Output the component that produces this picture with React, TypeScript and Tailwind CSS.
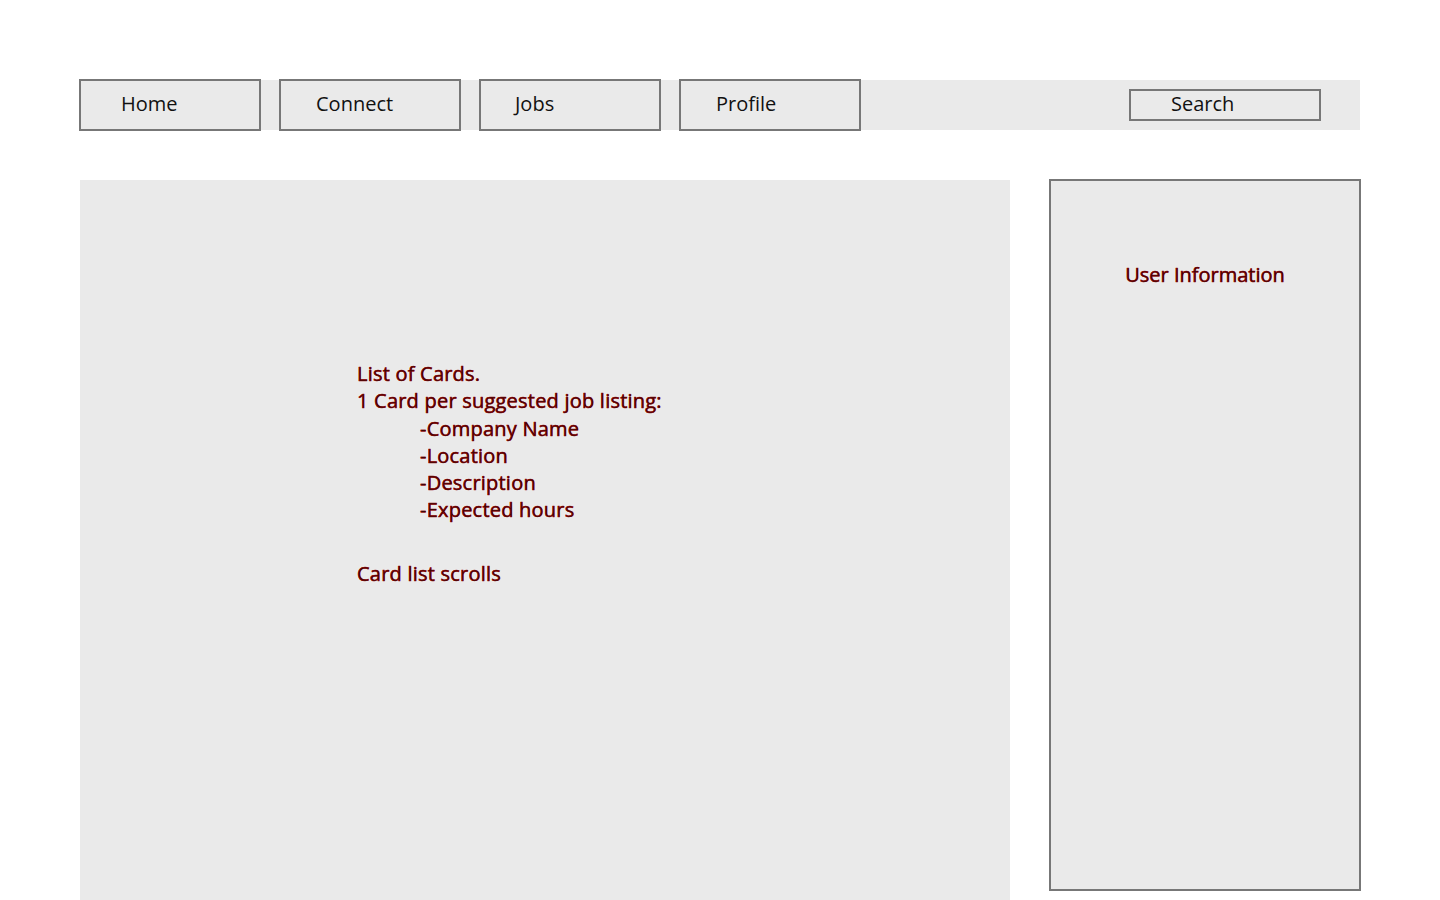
export default function App() {
  const navItems = [
    { label: "Home", pl: "pl-[40px]" },
    { label: "Connect", pl: "pl-[35px]" },
    { label: "Jobs", pl: "pl-[34px]" },
    { label: "Profile", pl: "pl-[35px]" },
  ];
  const red =
    "text-[#3a0606] [-webkit-text-stroke:0.45px_#950a0a] [text-shadow:0_0_0.6px_#c00000]";
  return (
    <div className="w-[1440px] h-[900px] overflow-hidden bg-white font-['Open_Sans',sans-serif] text-[20px]">
      <div className="pt-[80px] px-[80px]">
        <nav className="h-[50px] bg-[#eaeaea] flex items-stretch">
          <div className="flex gap-[18px] -ml-[1px] -my-[1px]">
            {navItems.map((n) => (
              <div
                key={n.label}
                className={`w-[182px] h-[52px] border-2 border-[#777] flex items-center ${n.pl} pb-[3px] text-[#111]`}
              >
                {n.label}
              </div>
            ))}
          </div>
          <div className="flex-1" />
          <div className="self-center mr-[39px] w-[192px] h-[32px] border-2 border-[#777] flex items-center pl-[40px] pb-[3px] text-[#111]">
            Search
          </div>
        </nav>
        <div className="mt-[50px] flex items-start">
          <main className="w-[930px] h-[720px] shrink-0 bg-[#eaeaea] pl-[277px] pt-[180px]">
            <div className={`${red} leading-[27.3px] tracking-[0.22px]`}>
              <div>List of Cards.</div>
              <div>1 Card per suggested job listing:</div>
              <div className="pl-[63px]">
                <div>-Company Name</div>
                <div>-Location</div>
                <div>-Description</div>
                <div>-Expected hours</div>
              </div>
              <div className="mt-[36px]">Card list scrolls</div>
            </div>
          </main>
          <aside className="ml-[39px] -mt-[1px] w-[312px] h-[712px] shrink-0 bg-[#eaeaea] border-2 border-[#777] pt-[80px]">
            <div className={`${red} text-center leading-[27px]`}>User Information</div>
          </aside>
        </div>
      </div>
    </div>
  );
}
